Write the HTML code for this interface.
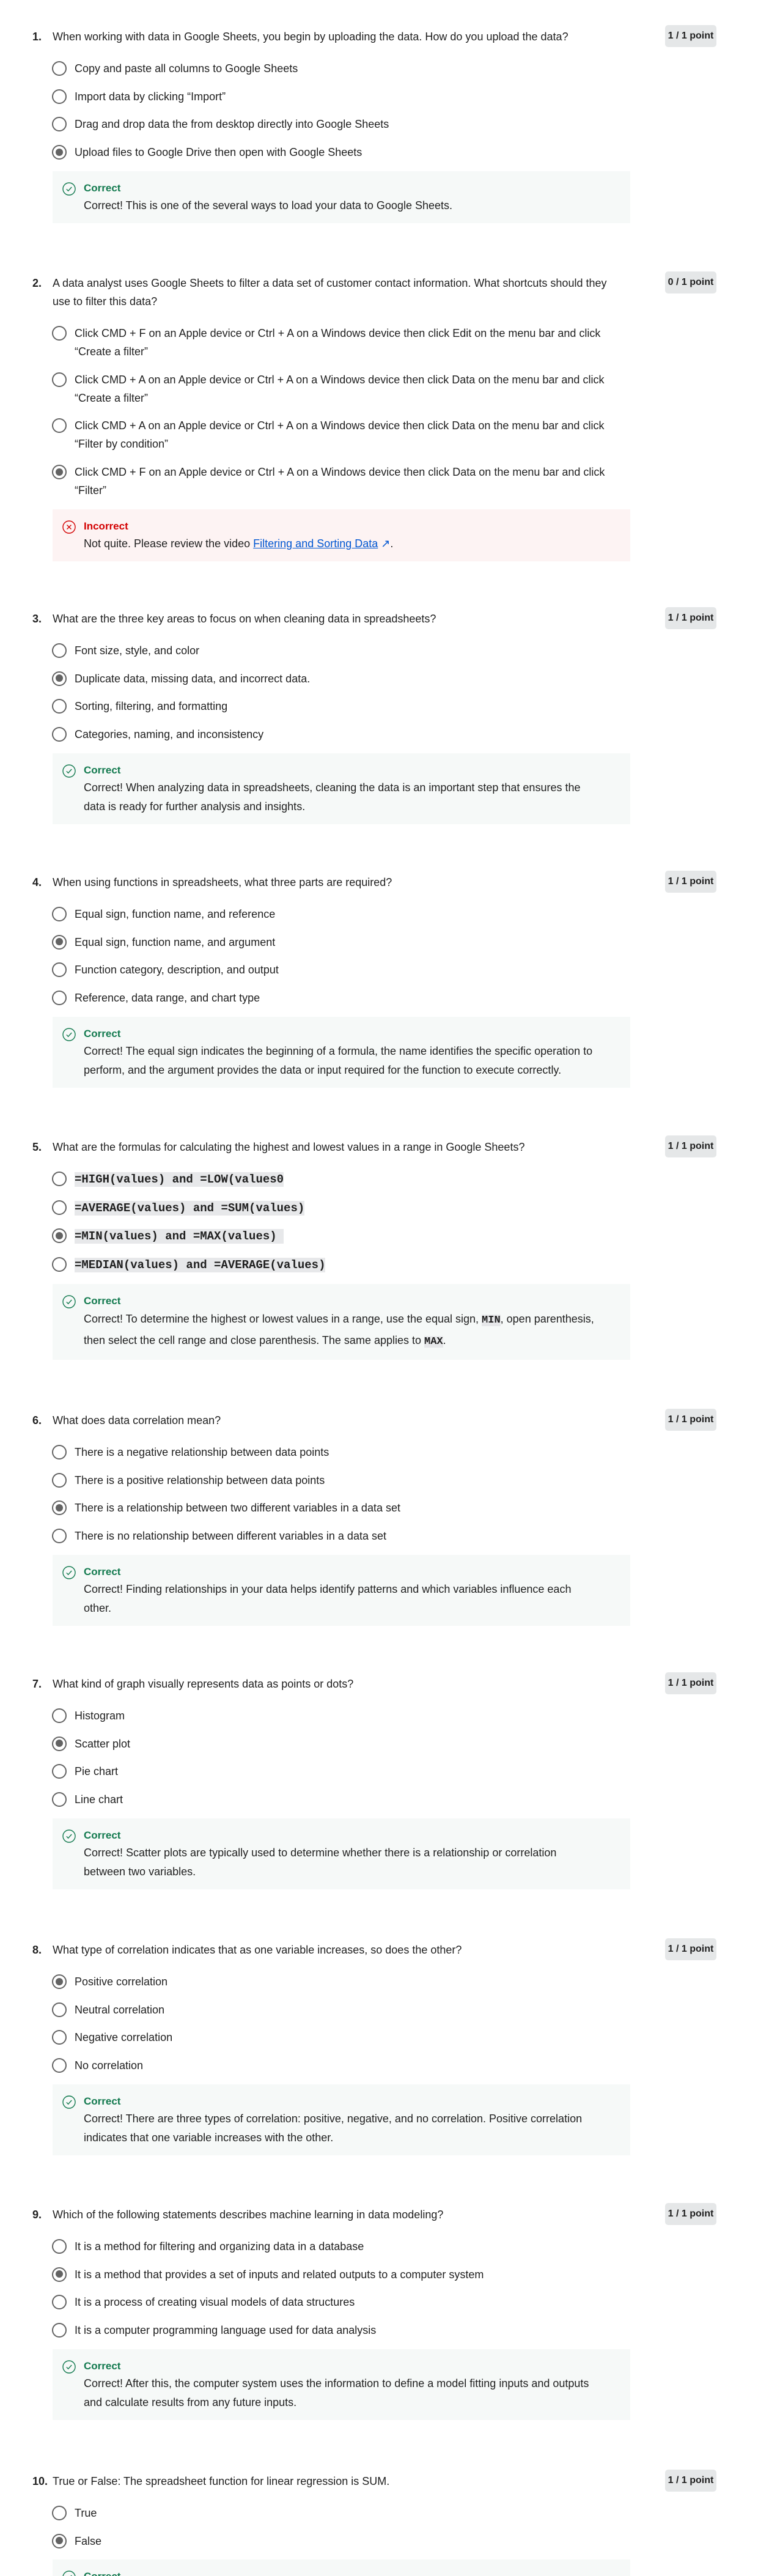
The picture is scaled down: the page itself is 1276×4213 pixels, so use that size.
<!DOCTYPE html>
<html><head><meta charset="utf-8"><style>
*{margin:0;padding:0;box-sizing:border-box}
html,body{width:1276px;height:4213px;background:#fff;overflow:hidden}
body{position:relative;font-family:"Liberation Sans",sans-serif;color:#1f1f1f;font-size:18px}
.q{position:absolute;left:0;width:1276px}
.qh{position:relative;height:30px;line-height:30px;white-space:nowrap}
.qh.two{height:60px}
.num{position:absolute;left:53px;top:0;font-weight:bold}
.qt{position:absolute;left:86px;top:0}
.badge{position:absolute;left:1088px;top:-4px;width:84px;height:36px;background:#e5e7e8;border-radius:5px;font-weight:bold;font-size:16px;line-height:36px;text-align:center}
.opts{margin-top:22px}
.opt{position:relative;line-height:30px;margin-bottom:15.7px;padding-left:122px;white-space:nowrap}
.radio{position:absolute;left:85px;top:3px;width:24px;height:24px;border:2.5px solid #636363;border-radius:50%}
.radio.sel::after{content:"";position:absolute;left:3.5px;top:3.5px;width:12px;height:12px;border-radius:50%;background:#636363}
.code{font-family:"Liberation Mono",monospace;font-weight:bold;font-size:19px;background:#e7e8ea;padding:1px 0;white-space:pre}
.fb{position:relative;margin-left:86px;width:945px;background:#f6f9f8;padding:16px 16px 13px 51px}
.fb.bad{background:#fdf3f3}
.ft{height:24px;line-height:24px;font-weight:bold;font-size:17px;color:#137a4f}
.bad .ft{color:#d30001}
.fi{position:absolute;left:16px;top:18px}
.fx{line-height:31px;white-space:nowrap;margin-top:1px}
a{color:#0056d2;text-decoration:underline}
.ic{font-family:"Liberation Mono",monospace;font-weight:bold;background:#e7e8ea;font-size:17px}
</style></head><body>

<svg width="0" height="0" style="position:absolute"><defs>
<symbol id="ok" viewBox="0 0 22 22"><circle cx="11" cy="11" r="10" fill="none" stroke="#137a4f" stroke-width="1.4"/><path d="M6.8 11.3l2.8 2.9 5.6-6.2" fill="none" stroke="#137a4f" stroke-width="1.4"/></symbol>
<symbol id="no" viewBox="0 0 22 22"><circle cx="11" cy="11" r="10" fill="none" stroke="#d30001" stroke-width="1.4"/><path d="M7.5 7.5l7 7M14.5 7.5l-7 7" fill="none" stroke="#d30001" stroke-width="1.4"/></symbol>
</defs></svg>

<div class="q" style="top:45px">
<div class="qh"><span class="num">1.</span><span class="qt">When working with data in Google Sheets, you begin by uploading the data. How do you upload the data?</span><span class="badge">1 / 1 point</span></div>
<div class="opts">
<div class="opt"><span class="radio"></span>Copy and paste all columns to Google Sheets</div>
<div class="opt"><span class="radio"></span>Import data by clicking “Import”</div>
<div class="opt"><span class="radio"></span>Drag and drop data the from desktop directly into Google Sheets</div>
<div class="opt"><span class="radio sel"></span>Upload files to Google Drive then open with Google Sheets</div>
</div>
<div class="fb"><svg class="fi" width="22" height="22"><use href="#ok"/></svg><div class="ft">Correct</div><div class="fx">Correct! This is one of the several ways to load your data to Google Sheets.</div></div>
</div>

<div class="q" style="top:448px">
<div class="qh two"><span class="num">2.</span><span class="qt">A data analyst uses Google Sheets to filter a data set of customer contact information. What shortcuts should they<br>use to filter this data?</span><span class="badge">0 / 1 point</span></div>
<div class="opts">
<div class="opt"><span class="radio"></span>Click CMD + F on an Apple device or Ctrl + A on a Windows device then click Edit on the menu bar and click<br>“Create a filter”</div>
<div class="opt"><span class="radio"></span>Click CMD + A on an Apple device or Ctrl + A on a Windows device then click Data on the menu bar and click<br>“Create a filter”</div>
<div class="opt"><span class="radio"></span>Click CMD + A on an Apple device or Ctrl + A on a Windows device then click Data on the menu bar and click<br>“Filter by condition”</div>
<div class="opt"><span class="radio sel"></span>Click CMD + F on an Apple device or Ctrl + A on a Windows device then click Data on the menu bar and click<br>“Filter”</div>
</div>
<div class="fb bad"><svg class="fi" width="22" height="22"><use href="#no"/></svg><div class="ft">Incorrect</div><div class="fx">Not quite. Please review the video <a>Filtering and Sorting Data</a> <span style="color:#0056d2">↗</span>.</div></div>
</div>

<div class="q" style="top:997px">
<div class="qh"><span class="num">3.</span><span class="qt">What are the three key areas to focus on when cleaning data in spreadsheets?</span><span class="badge">1 / 1 point</span></div>
<div class="opts">
<div class="opt"><span class="radio"></span>Font size, style, and color</div>
<div class="opt"><span class="radio sel"></span>Duplicate data, missing data, and incorrect data.</div>
<div class="opt"><span class="radio"></span>Sorting, filtering, and formatting</div>
<div class="opt"><span class="radio"></span>Categories, naming, and inconsistency</div>
</div>
<div class="fb"><svg class="fi" width="22" height="22"><use href="#ok"/></svg><div class="ft">Correct</div><div class="fx">Correct! When analyzing data in spreadsheets, cleaning the data is an important step that ensures the<br>data is ready for further analysis and insights.</div></div>
</div>

<div class="q" style="top:1428px">
<div class="qh"><span class="num">4.</span><span class="qt">When using functions in spreadsheets, what three parts are required?</span><span class="badge">1 / 1 point</span></div>
<div class="opts">
<div class="opt"><span class="radio"></span>Equal sign, function name, and reference</div>
<div class="opt"><span class="radio sel"></span>Equal sign, function name, and argument</div>
<div class="opt"><span class="radio"></span>Function category, description, and output</div>
<div class="opt"><span class="radio"></span>Reference, data range, and chart type</div>
</div>
<div class="fb"><svg class="fi" width="22" height="22"><use href="#ok"/></svg><div class="ft">Correct</div><div class="fx">Correct! The equal sign indicates the beginning of a formula, the name identifies the specific operation to<br>perform, and the argument provides the data or input required for the function to execute correctly.</div></div>
</div>

<div class="q" style="top:1861px">
<div class="qh"><span class="num">5.</span><span class="qt">What are the formulas for calculating the highest and lowest values in a range in Google Sheets?</span><span class="badge">1 / 1 point</span></div>
<div class="opts">
<div class="opt"><span class="radio"></span><span class="code">=HIGH(values) and =LOW(values0</span></div>
<div class="opt"><span class="radio"></span><span class="code">=AVERAGE(values) and =SUM(values)</span></div>
<div class="opt"><span class="radio sel"></span><span class="code">=MIN(values) and =MAX(values) </span></div>
<div class="opt"><span class="radio"></span><span class="code">=MEDIAN(values) and =AVERAGE(values)</span></div>
</div>
<div class="fb"><svg class="fi" width="22" height="22"><use href="#ok"/></svg><div class="ft">Correct</div><div class="fx" style="line-height:32px">Correct! To determine the highest or lowest values in a range, use the equal sign, <span class="ic">MIN</span>, open parenthesis,<br>then select the cell range and close parenthesis. The same applies to <span class="ic">MAX</span>.</div></div>
</div>

<div class="q" style="top:2308px">
<div class="qh"><span class="num">6.</span><span class="qt">What does data correlation mean?</span><span class="badge">1 / 1 point</span></div>
<div class="opts">
<div class="opt"><span class="radio"></span>There is a negative relationship between data points</div>
<div class="opt"><span class="radio"></span>There is a positive relationship between data points</div>
<div class="opt"><span class="radio sel"></span>There is a relationship between two different variables in a data set</div>
<div class="opt"><span class="radio"></span>There is no relationship between different variables in a data set</div>
</div>
<div class="fb"><svg class="fi" width="22" height="22"><use href="#ok"/></svg><div class="ft">Correct</div><div class="fx">Correct! Finding relationships in your data helps identify patterns and which variables influence each<br>other.</div></div>
</div>

<div class="q" style="top:2739px">
<div class="qh"><span class="num">7.</span><span class="qt">What kind of graph visually represents data as points or dots?</span><span class="badge">1 / 1 point</span></div>
<div class="opts">
<div class="opt"><span class="radio"></span>Histogram</div>
<div class="opt"><span class="radio sel"></span>Scatter plot</div>
<div class="opt"><span class="radio"></span>Pie chart</div>
<div class="opt"><span class="radio"></span>Line chart</div>
</div>
<div class="fb"><svg class="fi" width="22" height="22"><use href="#ok"/></svg><div class="ft">Correct</div><div class="fx">Correct! Scatter plots are typically used to determine whether there is a relationship or correlation<br>between two variables.</div></div>
</div>

<div class="q" style="top:3174px">
<div class="qh"><span class="num">8.</span><span class="qt">What type of correlation indicates that as one variable increases, so does the other?</span><span class="badge">1 / 1 point</span></div>
<div class="opts">
<div class="opt"><span class="radio sel"></span>Positive correlation</div>
<div class="opt"><span class="radio"></span>Neutral correlation</div>
<div class="opt"><span class="radio"></span>Negative correlation</div>
<div class="opt"><span class="radio"></span>No correlation</div>
</div>
<div class="fb"><svg class="fi" width="22" height="22"><use href="#ok"/></svg><div class="ft">Correct</div><div class="fx">Correct! There are three types of correlation: positive, negative, and no correlation. Positive correlation<br>indicates that one variable increases with the other.</div></div>
</div>

<div class="q" style="top:3607px">
<div class="qh"><span class="num">9.</span><span class="qt">Which of the following statements describes machine learning in data modeling?</span><span class="badge">1 / 1 point</span></div>
<div class="opts">
<div class="opt"><span class="radio"></span>It is a method for filtering and organizing data in a database</div>
<div class="opt"><span class="radio sel"></span>It is a method that provides a set of inputs and related outputs to a computer system</div>
<div class="opt"><span class="radio"></span>It is a process of creating visual models of data structures</div>
<div class="opt"><span class="radio"></span>It is a computer programming language used for data analysis</div>
</div>
<div class="fb"><svg class="fi" width="22" height="22"><use href="#ok"/></svg><div class="ft">Correct</div><div class="fx">Correct! After this, the computer system uses the information to define a model fitting inputs and outputs<br>and calculate results from any future inputs.</div></div>
</div>

<div class="q" style="top:4043px">
<div class="qh"><span class="num">10.</span><span class="qt">True or False: The spreadsheet function for linear regression is SUM.</span><span class="badge">1 / 1 point</span></div>
<div class="opts">
<div class="opt"><span class="radio"></span>True</div>
<div class="opt"><span class="radio sel"></span>False</div>
</div>
<div class="fb"><svg class="fi" width="22" height="22"><use href="#ok"/></svg><div class="ft">Correct</div><div class="fx">Correct! Linear regression uses a different function.</div></div>
</div>

</body></html>
